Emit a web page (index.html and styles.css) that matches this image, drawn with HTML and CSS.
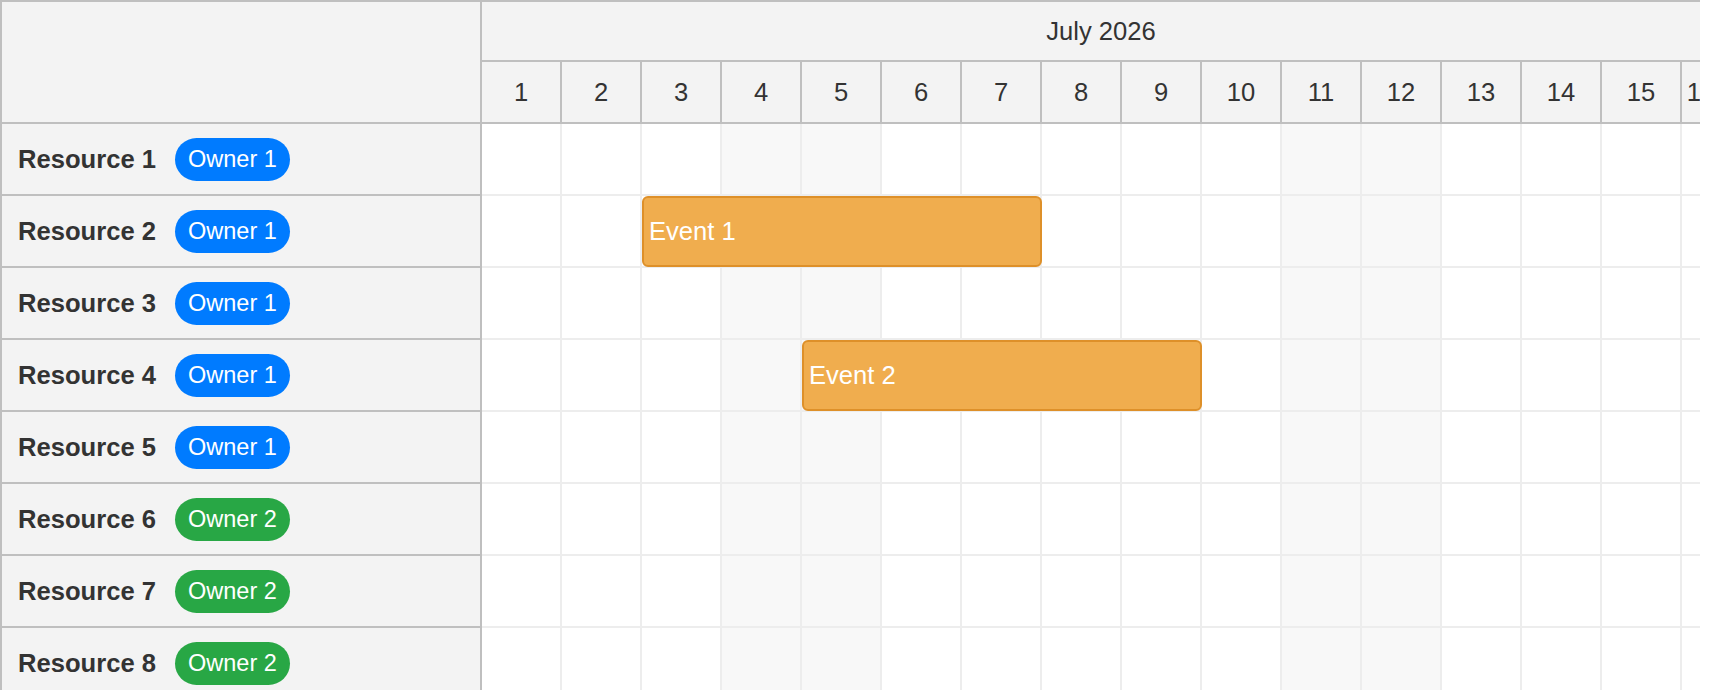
FILE: index.html
```html
<!DOCTYPE html>
<html lang="en">

<head>
    <meta charset="UTF-8">
    <meta name="viewport" content="width=device-width, initial-scale=1.0">
    <title>Resource Scheduler</title>
    <link rel="stylesheet" href="styles.css">
</head>

<body>
    <div class="scheduler">
        <div class="head">
            <div class="corner"></div>
            <div class="timeline-head">
                <div class="month">July 2026</div>
                <div class="days">
                    <div class="day">1</div>
                    <div class="day">2</div>
                    <div class="day">3</div>
                    <div class="day">4</div>
                    <div class="day">5</div>
                    <div class="day">6</div>
                    <div class="day">7</div>
                    <div class="day">8</div>
                    <div class="day">9</div>
                    <div class="day">10</div>
                    <div class="day">11</div>
                    <div class="day">12</div>
                    <div class="day">13</div>
                    <div class="day">14</div>
                    <div class="day">15</div>
                    <div class="day last">16</div>
                </div>
            </div>
        </div>

        <div class="body">
            <div class="resources">
                <div class="resource"><span class="name">Resource 1</span><span class="badge owner-1">Owner 1</span></div>
                <div class="resource"><span class="name">Resource 2</span><span class="badge owner-1">Owner 1</span></div>
                <div class="resource"><span class="name">Resource 3</span><span class="badge owner-1">Owner 1</span></div>
                <div class="resource"><span class="name">Resource 4</span><span class="badge owner-1">Owner 1</span></div>
                <div class="resource"><span class="name">Resource 5</span><span class="badge owner-1">Owner 1</span></div>
                <div class="resource"><span class="name">Resource 6</span><span class="badge owner-2">Owner 2</span></div>
                <div class="resource"><span class="name">Resource 7</span><span class="badge owner-2">Owner 2</span></div>
                <div class="resource"><span class="name">Resource 8</span><span class="badge owner-2">Owner 2</span></div>
            </div>

            <div class="lanes">
                <div class="lane">
                    <div class="cell"></div><div class="cell"></div><div class="cell"></div>
                    <div class="cell weekend"></div><div class="cell weekend"></div>
                    <div class="cell"></div><div class="cell"></div><div class="cell"></div><div class="cell"></div><div class="cell"></div>
                    <div class="cell weekend"></div><div class="cell weekend"></div>
                    <div class="cell"></div><div class="cell"></div><div class="cell"></div><div class="cell last"></div>
                </div>
                <div class="lane">
                    <div class="cell"></div><div class="cell"></div><div class="cell"></div>
                    <div class="cell weekend"></div><div class="cell weekend"></div>
                    <div class="cell"></div><div class="cell"></div><div class="cell"></div><div class="cell"></div><div class="cell"></div>
                    <div class="cell weekend"></div><div class="cell weekend"></div>
                    <div class="cell"></div><div class="cell"></div><div class="cell"></div><div class="cell last"></div>
                    <div class="event event-1">Event 1</div>
                </div>
                <div class="lane">
                    <div class="cell"></div><div class="cell"></div><div class="cell"></div>
                    <div class="cell weekend"></div><div class="cell weekend"></div>
                    <div class="cell"></div><div class="cell"></div><div class="cell"></div><div class="cell"></div><div class="cell"></div>
                    <div class="cell weekend"></div><div class="cell weekend"></div>
                    <div class="cell"></div><div class="cell"></div><div class="cell"></div><div class="cell last"></div>
                </div>
                <div class="lane">
                    <div class="cell"></div><div class="cell"></div><div class="cell"></div>
                    <div class="cell weekend"></div><div class="cell weekend"></div>
                    <div class="cell"></div><div class="cell"></div><div class="cell"></div><div class="cell"></div><div class="cell"></div>
                    <div class="cell weekend"></div><div class="cell weekend"></div>
                    <div class="cell"></div><div class="cell"></div><div class="cell"></div><div class="cell last"></div>
                    <div class="event event-2">Event 2</div>
                </div>
                <div class="lane">
                    <div class="cell"></div><div class="cell"></div><div class="cell"></div>
                    <div class="cell weekend"></div><div class="cell weekend"></div>
                    <div class="cell"></div><div class="cell"></div><div class="cell"></div><div class="cell"></div><div class="cell"></div>
                    <div class="cell weekend"></div><div class="cell weekend"></div>
                    <div class="cell"></div><div class="cell"></div><div class="cell"></div><div class="cell last"></div>
                </div>
                <div class="lane">
                    <div class="cell"></div><div class="cell"></div><div class="cell"></div>
                    <div class="cell weekend"></div><div class="cell weekend"></div>
                    <div class="cell"></div><div class="cell"></div><div class="cell"></div><div class="cell"></div><div class="cell"></div>
                    <div class="cell weekend"></div><div class="cell weekend"></div>
                    <div class="cell"></div><div class="cell"></div><div class="cell"></div><div class="cell last"></div>
                </div>
                <div class="lane">
                    <div class="cell"></div><div class="cell"></div><div class="cell"></div>
                    <div class="cell weekend"></div><div class="cell weekend"></div>
                    <div class="cell"></div><div class="cell"></div><div class="cell"></div><div class="cell"></div><div class="cell"></div>
                    <div class="cell weekend"></div><div class="cell weekend"></div>
                    <div class="cell"></div><div class="cell"></div><div class="cell"></div><div class="cell last"></div>
                </div>
                <div class="lane">
                    <div class="cell"></div><div class="cell"></div><div class="cell"></div>
                    <div class="cell weekend"></div><div class="cell weekend"></div>
                    <div class="cell"></div><div class="cell"></div><div class="cell"></div><div class="cell"></div><div class="cell"></div>
                    <div class="cell weekend"></div><div class="cell weekend"></div>
                    <div class="cell"></div><div class="cell"></div><div class="cell"></div><div class="cell last"></div>
                </div>
            </div>
        </div>
    </div>
</body>

</html>
```

FILE: styles.css
```css
html,
body {
    margin: 0;
    padding: 0;
    height: 100%;
    overflow: hidden;
    background-color: #fff;
}

body {
    font-family: "Liberation Sans", Arial, sans-serif;
    color: #333;
}

.scheduler {
    width: 1700px;
    box-sizing: border-box;
    overflow: hidden;
    border-top: 2px solid #bfbfbf;
    border-left: 2px solid #bfbfbf;
}

.head,
.body {
    display: flex;
}

.corner {
    flex: 0 0 478px;
    height: 120px;
    background-color: #f3f3f3;
    border-right: 2px solid #bfbfbf;
    border-bottom: 2px solid #bfbfbf;
}

.timeline-head,
.lanes {
    flex: 0 0 1238px;
}

.month {
    height: 58px;
    line-height: 58px;
    text-align: center;
    font-size: 25.6px;
    background-color: #f3f3f3;
    border-bottom: 2px solid #bfbfbf;
}

.days {
    display: flex;
}

.day {
    flex: 0 0 78px;
    height: 60px;
    line-height: 60px;
    text-align: center;
    font-size: 25.6px;
    background-color: #f3f3f3;
    border-right: 2px solid #bfbfbf;
    border-bottom: 2px solid #bfbfbf;
}

.day.last {
    flex-basis: 38px;
    border-right: 0;
}

.resources {
    flex: 0 0 478px;
    border-right: 2px solid #bfbfbf;
}

.resource {
    display: flex;
    align-items: center;
    gap: 19px;
    height: 70px;
    padding-left: 16px;
    background-color: #f3f3f3;
    border-bottom: 2px solid #bfbfbf;
}

.name {
    font-size: 25.6px;
    font-weight: bold;
}

.badge {
    height: 43px;
    line-height: 43px;
    padding: 0 13px;
    border-radius: 22px;
    font-size: 23.5px;
    color: #fff;
}

.owner-1 {
    background-color: #007bff;
}

.owner-2 {
    background-color: #28a745;
}

.lane {
    position: relative;
    display: flex;
}

.cell {
    flex: 0 0 78px;
    height: 70px;
    background-color: #fff;
    border-right: 2px solid #ededed;
    border-bottom: 2px solid #ededed;
}

.cell.weekend {
    background-color: #f8f8f8;
}

.cell.last {
    flex-basis: 38px;
}

.event {
    position: absolute;
    top: 0;
    box-sizing: border-box;
    height: 71px;
    width: 400px;
    display: flex;
    align-items: center;
    padding-left: 5px;
    background-color: #f0ad4e;
    border: 2px solid #de9029;
    border-radius: 6px;
    color: #fff;
    font-size: 25.6px;
}

.event-1 {
    left: 160px;
}

.event-2 {
    left: 320px;
}
```
